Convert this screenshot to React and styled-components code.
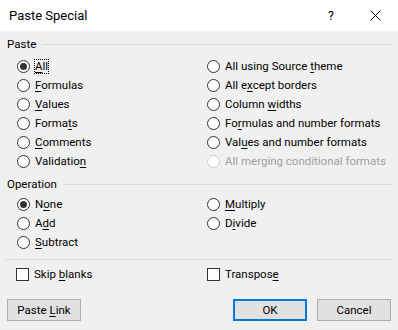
import React from "react";
import styled, { createGlobalStyle, css } from "styled-components";

const Global = createGlobalStyle`
  html, body { margin: 0; padding: 0; background: #f0f0f0; }
  body { font-family: Roboto, "Noto Sans", sans-serif; font-size: 11.5px; color: #000; }
`;

const Window = styled.div`
  width: 398px;
  height: 330px;
  background: #f0f0f0;
  display: flex;
  flex-direction: column;
  overflow: hidden;
`;

const TitleBar = styled.div`
  height: 31px;
  background: #fff;
  display: flex;
  align-items: center;
  padding-left: 9px;
  flex-shrink: 0;
`;

const Title = styled.div`
  flex: 1;
  font-size: 13px;
  line-height: 15px;
  margin-top: -1px;
`;

const TitleButton = styled.div`
  width: ${(p) => p.$w}px;
  margin-right: ${(p) => p.$mr || 0}px;
  height: 31px;
  display: flex;
  align-items: center;
  justify-content: center;
  font-size: 12.5px;
`;

const Body = styled.div`
  display: flex;
  flex-direction: column;
  padding: 0 6px 0 7px;
`;

const GroupHeader = styled.div`
  height: 16px;
  margin-top: ${(p) => p.$mt}px;
  display: flex;
  align-items: center;
  gap: 6px;
  line-height: 16px;
  &::after {
    content: "";
    flex: 1;
    height: 1px;
    background: #dcdcdc;
  }
`;

const OptionGrid = styled.div`
  margin-top: ${(p) => p.$mt}px;
  display: grid;
  grid-template-columns: 190px 1fr;
  grid-auto-flow: column;
  grid-template-rows: repeat(${(p) => p.$rows}, 19px);
  padding-left: 10px;
`;

const OptionRow = styled.label`
  display: flex;
  align-items: center;
  gap: 4px;
  height: 19px;
  line-height: 15px;
  white-space: nowrap;
  color: ${(p) => (p.$disabled ? "#a0a0a0" : "#000")};
`;

const RadioCircle = styled.span`
  width: 13px;
  height: 13px;
  box-sizing: border-box;
  border-radius: 50%;
  border: 1px solid ${(p) => (p.$disabled ? "#cccccc" : "#333")};
  background: #fff;
  display: flex;
  align-items: center;
  justify-content: center;
  flex-shrink: 0;
  ${(p) =>
    p.$checked &&
    css`
      &::after {
        content: "";
        width: 7px;
        height: 7px;
        border-radius: 50%;
        background: #333;
      }
    `}
`;

const CheckBox = styled.span`
  width: 13px;
  height: 13px;
  box-sizing: border-box;
  border: 1px solid #333;
  background: #fff;
  flex-shrink: 0;
`;

const LabelText = styled.span`
  padding: 0 1px;
  ${(p) =>
    p.$focus &&
    css`
      outline: 1px dotted #000;
      outline-offset: -1px;
    `}
  u { text-decoration: underline; text-underline-offset: 2px; }
`;

const Separator = styled.div`
  height: 1px;
  background: #dcdcdc;
  margin-top: ${(p) => p.$mt}px;
  margin-left: -2px;
`;

const CheckGrid = styled.div`
  margin-top: ${(p) => p.$mt}px;
  display: grid;
  grid-template-columns: 191px 1fr;
  padding-left: 9px;
`;

const ButtonBar = styled.div`
  margin-top: ${(p) => p.$mt}px;
  display: flex;
  gap: 10px;
  padding-right: 1px;
`;

const Button = styled.button`
  width: 74px;
  height: 22px;
  box-sizing: border-box;
  background: #e1e1e1;
  border: ${(p) => (p.$default ? "2px solid #0078d7" : "1px solid #adadad")};
  font-family: inherit;
  font-size: 11.5px;
  color: #000;
  padding: 0;
  margin-left: ${(p) => (p.$push ? "auto" : "0")};
  line-height: 18px;
  u { text-decoration: underline; text-underline-offset: 2px; }
`;

const Lbl = ({ text, k }) => {
  if (k == null) return text;
  return (
    <>
      {text.slice(0, k)}
      <u>{text[k]}</u>
      {text.slice(k + 1)}
    </>
  );
};

const pasteOptions = [
  { t: "All", k: 0, checked: true, focus: true },
  { t: "Formulas", k: 0 },
  { t: "Values", k: 0 },
  { t: "Formats", k: 5 },
  { t: "Comments", k: 0 },
  { t: "Validation", k: 9 },
  { t: "All using Source theme", k: 17 },
  { t: "All except borders", k: 5 },
  { t: "Column widths", k: 7 },
  { t: "Formulas and number formats", k: 2 },
  { t: "Values and number formats", k: 3 },
  { t: "All merging conditional formats", disabled: true },
];

const opOptions = [
  { t: "None", k: 1, checked: true },
  { t: "Add", k: 1 },
  { t: "Subtract", k: 0 },
  { t: "Multiply", k: 0 },
  { t: "Divide", k: 1 },
];

const Radio = ({ o }) => (
  <OptionRow $disabled={o.disabled}>
    <RadioCircle $checked={o.checked} $disabled={o.disabled} />
    <LabelText $focus={o.focus}>
      <Lbl text={o.t} k={o.k} />
    </LabelText>
  </OptionRow>
);

export default function App() {
  return (
    <>
      <Global />
      <Window>
        <TitleBar>
          <Title>Paste Special</Title>
          <TitleButton $w={14} $mr={14}>?</TitleButton>
          <TitleButton $w={46}>
            <svg width="11" height="11" viewBox="0 0 11 11">
              <path d="M0.5 0.5 L10.5 10.5 M10.5 0.5 L0.5 10.5" stroke="#000" strokeWidth="1" fill="none" />
            </svg>
          </TitleButton>
        </TitleBar>
        <Body>
          <GroupHeader $mt={5}>Paste</GroupHeader>
          <OptionGrid $mt={5} $rows={6}>
            {pasteOptions.map((o) => (
              <Radio key={o.t} o={o} />
            ))}
          </OptionGrid>
          <GroupHeader $mt={5}>Operation</GroupHeader>
          <OptionGrid $mt={3} $rows={3}>
            {opOptions.map((o) => (
              <Radio key={o.t} o={o} />
            ))}
          </OptionGrid>
          <Separator $mt={7} />
          <CheckGrid $mt={5}>
            <OptionRow>
              <CheckBox />
              <LabelText>
                <Lbl text="Skip blanks" k={5} />
              </LabelText>
            </OptionRow>
            <OptionRow>
              <CheckBox />
              <LabelText>
                <Lbl text="Transpose" k={8} />
              </LabelText>
            </OptionRow>
          </CheckGrid>
          <ButtonBar $mt={15}>
            <Button>
              Paste <u>L</u>ink
            </Button>
            <Button $push $default>OK</Button>
            <Button>Cancel</Button>
          </ButtonBar>
        </Body>
      </Window>
    </>
  );
}
